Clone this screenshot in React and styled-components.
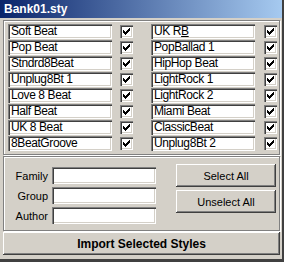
import React from 'react'
import styled, { createGlobalStyle } from 'styled-components';

const Global = createGlobalStyle`
    body {
        margin: 0;
        background: #d4d0c8;
        font-family: "Liberation Sans", Arial, sans-serif;
    }
`

const Window = styled.div`
    width: 284px;
    height: 262px;
    box-sizing: border-box;
    background: #d4d0c8;
    border-right: 2px solid #404040;
    border-bottom: 3px solid #404040;
    display: flex;
    flex-direction: column;
`

const TitleBar = styled.div`
    height: 18px;
    background: linear-gradient(to right, #0a246a, #a6caf0);
    color: #fff;
    font-weight: bold;
    font-size: 12px;
    line-height: 18px;
    padding-left: 4px;
`

const Body = styled.div`
    padding: 2px 0 2px 3px;
    display: flex;
    flex-direction: column;
    gap: 1px;
`

const Frame = styled.div`
    width: 277px;
    height: ${p => p.$h ? p.$h + 'px' : 'auto'};
    box-sizing: border-box;
    border: 1px solid #808080;
    box-shadow: inset 1px 1px #fff, 1px 1px #fff;
    padding: ${p => p.$pad};
    display: flex;
    gap: ${p => p.$gap}px;
`

const Column = styled.div`
    display: flex;
    flex-direction: column;
    flex-shrink: 0;
    gap: ${p => p.$gap || 1}px;
    padding-top: ${p => p.$top || 0}px;
`

const Row = styled.div`
    display: flex;
    align-items: center;
    gap: ${p => p.$gap}px;
`

const TextBox = styled.div`
    width: 104px;
    height: ${p => p.$h || 15}px;
    flex-shrink: 0;
    box-sizing: border-box;
    background: #fff;
    box-shadow: inset 1px 1px #808080, inset 2px 2px #404040, inset -1px -1px #fff, inset -2px -2px #d4d0c8;
    font-size: 12px;
    letter-spacing: -0.4px;
    line-height: 15px;
    padding-left: 3px;
    color: #000;
    white-space: nowrap;
    overflow: hidden;
`

const CheckBox = styled.div`
    width: 13px;
    height: 13px;
    flex-shrink: 0;
    box-sizing: border-box;
    background: #fff;
    box-shadow: inset 1px 1px #808080, inset 2px 2px #404040, inset -1px -1px #fff, inset -2px -2px #d4d0c8;
    display: flex;
    align-items: center;
    justify-content: center;
`

const Label = styled.div`
    width: 40px;
    flex-shrink: 0;
    text-align: right;
    font-size: 11px;
    color: #000;
`

const Button = styled.div`
    width: ${p => p.$w}px;
    height: 23px;
    flex-shrink: 0;
    box-sizing: border-box;
    background: #d4d0c8;
    box-shadow: inset -1px -1px #404040, inset 1px 1px #fff, inset -2px -2px #808080;
    display: flex;
    align-items: center;
    justify-content: center;
    font-size: ${p => p.$bold ? 12 : 11}px;
    font-weight: ${p => p.$bold ? 'bold' : 'normal'};
    color: #000;
`

const Check = () => (
    <svg width="7" height="7" viewBox="0 0 7 7">
        <path d="M0 2h1v1h1v1h1v-1h1v-1h1v-1h1v-1h1v3h-1v1h-1v1h-1v1h-1v1h-1v-1h-1v-1h-1z" fill="#000"/>
    </svg>
)

const left = ['Soft Beat', 'Pop Beat', 'Stndrd8Beat', 'Unplug8Bt 1', 'Love 8 Beat', 'Half Beat', 'UK 8 Beat', '8BeatGroove']
const right = [<>UK R<u>B</u></>, 'PopBallad 1', 'HipHop Beat', 'LightRock 1', 'LightRock 2', 'Miami Beat', 'ClassicBeat', 'Unplug8Bt 2']

const App = () => {
    return (
        <>
        <Global/>
        <Window>
            <TitleBar>Bank01.sty</TitleBar>
            <Body>
                <Frame $pad="3px 0 3px 4px" $gap={18}>
                    <Column>
                        {left.map((name, i) => (
                            <Row key={i} $gap={8}>
                                <TextBox>{name}</TextBox>
                                <CheckBox><Check/></CheckBox>
                            </Row>
                        ))}
                    </Column>
                    <Column>
                        {right.map((name, i) => (
                            <Row key={i} $gap={9}>
                                <TextBox>{name}</TextBox>
                                <CheckBox><Check/></CheckBox>
                            </Row>
                        ))}
                    </Column>
                </Frame>
                <Frame $pad="0 0 0 4px" $gap={20} $h={75}>
                    <Column $gap={3} $top={10}>
                        {['Family', 'Group', 'Author'].map(l => (
                            <Row key={l} $gap={4}>
                                <Label>{l}</Label>
                                <TextBox $h={17}/>
                            </Row>
                        ))}
                    </Column>
                    <Column $gap={3} $top={7}>
                        <Button $w={100}>Select All</Button>
                        <Button $w={100}>Unselect All</Button>
                    </Column>
                </Frame>
                <Button $bold $w={277}>Import Selected Styles</Button>
            </Body>
        </Window>
        </>
    )
}

export default App;
